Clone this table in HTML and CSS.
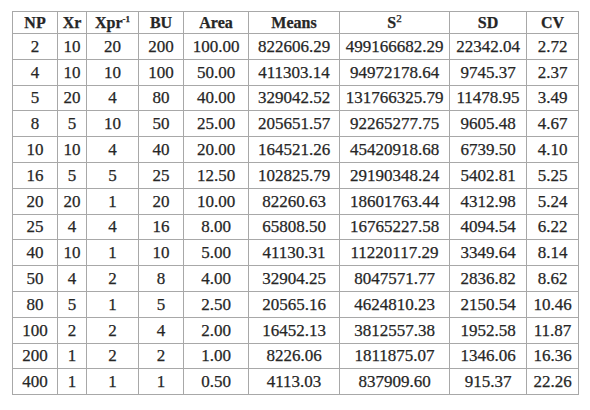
FILE: index.html
```html
<!DOCTYPE html>
<html>
<head>
<meta charset="utf-8">
<link rel="stylesheet" href="styles.css">
</head>
<body>
<div class="wrap">
<table class="data">
<colgroup>
<col class="c1"><col class="c2"><col class="c3"><col class="c4"><col class="c5"><col class="c6"><col class="c7"><col class="c8"><col class="c9">
</colgroup>
<thead>
<tr><th>NP</th><th>Xr</th><th>Xpr<sup class="sm">-1</sup></th><th>BU</th><th>Area</th><th>Means</th><th>S<sup>2</sup></th><th>SD</th><th>CV</th></tr>
</thead>
<tbody>
<tr><td>2</td><td>10</td><td>20</td><td>200</td><td>100.00</td><td>822606.29</td><td>499166682.29</td><td>22342.04</td><td>2.72</td></tr>
<tr><td>4</td><td>10</td><td>10</td><td>100</td><td>50.00</td><td>411303.14</td><td>94972178.64</td><td>9745.37</td><td>2.37</td></tr>
<tr><td>5</td><td>20</td><td>4</td><td>80</td><td>40.00</td><td>329042.52</td><td>131766325.79</td><td>11478.95</td><td>3.49</td></tr>
<tr><td>8</td><td>5</td><td>10</td><td>50</td><td>25.00</td><td>205651.57</td><td>92265277.75</td><td>9605.48</td><td>4.67</td></tr>
<tr><td>10</td><td>10</td><td>4</td><td>40</td><td>20.00</td><td>164521.26</td><td>45420918.68</td><td>6739.50</td><td>4.10</td></tr>
<tr><td>16</td><td>5</td><td>5</td><td>25</td><td>12.50</td><td>102825.79</td><td>29190348.24</td><td>5402.81</td><td>5.25</td></tr>
<tr><td>20</td><td>20</td><td>1</td><td>20</td><td>10.00</td><td>82260.63</td><td>18601763.44</td><td>4312.98</td><td>5.24</td></tr>
<tr><td>25</td><td>4</td><td>4</td><td>16</td><td>8.00</td><td>65808.50</td><td>16765227.58</td><td>4094.54</td><td>6.22</td></tr>
<tr><td>40</td><td>10</td><td>1</td><td>10</td><td>5.00</td><td>41130.31</td><td>11220117.29</td><td>3349.64</td><td>8.14</td></tr>
<tr><td>50</td><td>4</td><td>2</td><td>8</td><td>4.00</td><td>32904.25</td><td>8047571.77</td><td>2836.82</td><td>8.62</td></tr>
<tr><td>80</td><td>5</td><td>1</td><td>5</td><td>2.50</td><td>20565.16</td><td>4624810.23</td><td>2150.54</td><td>10.46</td></tr>
<tr><td>100</td><td>2</td><td>2</td><td>4</td><td>2.00</td><td>16452.13</td><td>3812557.38</td><td>1952.58</td><td>11.87</td></tr>
<tr><td>200</td><td>1</td><td>2</td><td>2</td><td>1.00</td><td>8226.06</td><td>1811875.07</td><td>1346.06</td><td>16.36</td></tr>
<tr><td>400</td><td>1</td><td>1</td><td>1</td><td>0.50</td><td>4113.03</td><td>837909.60</td><td>915.37</td><td>22.26</td></tr>
</tbody>
</table>
</div>
</body>
</html>
```

FILE: styles.css
```css
html, body {
  margin: 0;
  padding: 0;
  background: #ffffff;
}
.wrap {
  padding: 11px 0 0 12px;
}
.data {
  border-collapse: collapse;
  table-layout: fixed;
  width: 566px;
  font-family: "Liberation Serif", "DejaVu Serif", serif;
  font-size: 17px;
  color: #262626;
  -webkit-text-stroke: 0.25px #262626;
  border: 1px solid #8e8e8e;
}
.c1 { width: 45px; }
.c2 { width: 29px; }
.c3 { width: 52px; }
.c4 { width: 45px; }
.c5 { width: 65px; }
.c6 { width: 91px; }
.c7 { width: 110px; }
.c8 { width: 77px; }
.c9 { width: 52px; }
.data th, .data td {
  border: 1px solid #a8a8a8;
  text-align: center;
  padding: 0;
  white-space: nowrap;
  overflow: hidden;
}
.data th {
  height: 21px;
  font-weight: bold;
  font-size: 16px;
  line-height: 16px;
}
.data td {
  height: 24.8px;
  line-height: 17px;
}
.data sup {
  font-size: 11px;
  line-height: 0;
  vertical-align: 6px;
  font-weight: normal;
}
.data sup.sm {
  font-size: 9px;
  font-weight: bold;
}
```
